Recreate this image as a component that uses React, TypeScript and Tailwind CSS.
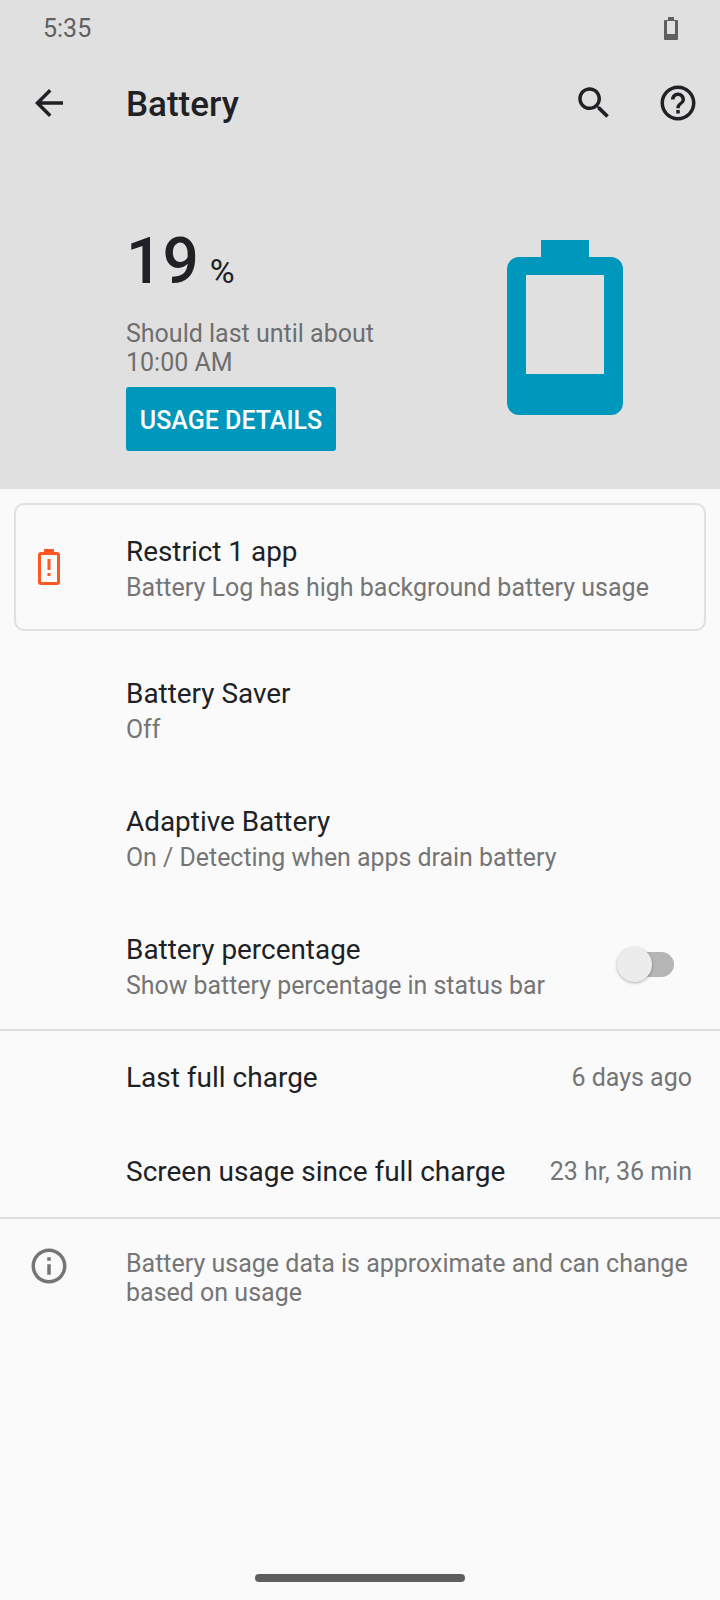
import React from 'react';

const font = { fontFamily: 'Roboto, sans-serif' };

const SettingRow: React.FC<{ title: string; summary: string; children?: React.ReactNode }> = ({ title, summary, children }) => (
    <div className="h-[128px] flex items-center pl-[126px] pr-[46px]">
        <div className="flex-1 min-w-0">
            <div className="text-[27.9px] leading-[37px] text-[#202124]">{title}</div>
            <div className="text-[24.9px] leading-[36px] text-[#757575]">{summary}</div>
        </div>
        {children}
    </div>
);

const ValueRow: React.FC<{ title: string; value: string; className: string }> = ({ title, value, className }) => (
    <div className={`flex items-center justify-between pl-[126px] pr-[28px] ${className}`}>
        <div className="text-[28px] text-[#202124]">{title}</div>
        <div className="text-[25px] text-[#757575]">{value}</div>
    </div>
);

const App: React.FC = () => {
    return (
        <div className="w-[720px] h-[1600px] bg-[#fafafa] flex flex-col relative overflow-hidden" style={font}>
            <div className="bg-[#e0e0e0] h-[489px] shrink-0">
                {/* status bar */}
                <div className="h-[56px] flex items-center justify-between pl-[43px] pr-[42px]">
                    <span className="pt-[2px] text-[25px] text-[#5f5f5f]">5:35</span>
                    <svg width="14" height="23" viewBox="0 0 14 23">
                        <path d="M4 0h6v3h3a1 1 0 0 1 1 1v18a1 1 0 0 1-1 1H1a1 1 0 0 1-1-1V4a1 1 0 0 1 1-1h3z" fill="#5f5f5f" />
                        <rect x="3" y="4" width="8" height="13" fill="#e0e0e0" />
                    </svg>
                </div>
                {/* toolbar */}
                <div className="h-[94px] flex items-center">
                    <div className="w-[98px] flex justify-center">
                        <svg width="42" height="42" viewBox="0 0 24 24" fill="#202124">
                            <path d="M20 11H7.830l5.590-5.590L12 4l-8 8 8 8 1.410-1.410L7.830 13H20v-2z" />
                        </svg>
                    </div>
                    <div className="ml-[28px] flex-1 pt-[4px] text-[35px] font-medium text-[#202124]">Battery</div>
                    <svg className="mr-[42px]" width="42" height="42" viewBox="0 0 24 24" fill="#202124">
                        <path d="M15.500 14h-.790l-.280-.270C15.410 12.590 16 11.110 16 9.500 16 5.910 13.090 3 9.500 3S3 5.910 3 9.500 5.910 16 9.500 16c1.610 0 3.090-.590 4.230-1.570l.270.280v.790l5 4.990L20.490 19l-4.990-5zm-6 0C7.010 14 5 11.990 5 9.500S7.010 5 9.500 5 14 7.010 14 9.500 11.990 14 9.500 14z" />
                    </svg>
                    <svg className="mr-[21px]" width="42" height="42" viewBox="0 0 24 24" fill="#202124">
                        <path d="M11 18h2v-2h-2v2zm1-16C6.480 2 2 6.480 2 12s4.480 10 10 10 10-4.480 10-10S17.520 2 12 2zm0 18c-4.410 0-8-3.590-8-8s3.590-8 8-8 8 3.590 8 8-3.590 8-8 8zm0-14c-2.210 0-4 1.790-4 4h2c0-1.100.9-2 2-2s2 .9 2 2c0 2-3 1.750-3 5h2c0-2.250 3-2.500 3-5 0-2.210-1.790-4-4-4z" />
                    </svg>
                </div>
                {/* battery summary */}
                <div className="flex justify-between pl-[126px] pr-[97px] pt-[76px]">
                    <div className="-mt-[2px]">
                        <div className="flex items-baseline h-[75px] text-[#202124]">
                            <span className="text-[64px] leading-[75px] font-medium">19</span>
                            <span className="text-[34px] ml-[11px]">%</span>
                        </div>
                        <div className="text-[25px] leading-[29px] text-[#6e6e6e] mt-[20px]">
                            Should last until about
                            <br />
                            10:00 AM
                        </div>
                        <div className="mt-[10px] w-[210px] h-[64px] pt-[4px] bg-[#0097bd] rounded-[3px] flex items-center justify-center text-[25px] font-medium text-white">
                            USAGE DETAILS
                        </div>
                    </div>
                    <svg className="mt-[14px]" width="116" height="175" viewBox="0 0 116 175">
                        <path
                            fillRule="evenodd"
                            fill="#0097bd"
                            d="M34 0h48v17h22a12 12 0 0 1 12 12v134a12 12 0 0 1-12 12H12a12 12 0 0 1-12-12V29a12 12 0 0 1 12-12h22zM19 35v99h78V35z"
                        />
                    </svg>
                </div>
            </div>

            {/* restrict card */}
            <div className="mt-[14px] mx-[14px] h-[128px] border-2 border-[#dfe0e2] rounded-[10px] flex items-center">
                <div className="w-[110px] pl-[22px] shrink-0">
                    <svg width="22" height="36" viewBox="0 0 22 36">
                        <path
                            fillRule="evenodd"
                            fill="#ff5722"
                            d="M6 0h10v3h3a3 3 0 0 1 3 3v27a3 3 0 0 1-3 3H3a3 3 0 0 1-3-3V6a3 3 0 0 1 3-3h3zM3 6v27h16V6zM9.500 10h3v11h-3zM9.500 24h3v3h-3z"
                        />
                    </svg>
                </div>
                <div className="mt-[5px]">
                    <div className="text-[27.9px] leading-[37px] text-[#202124]">Restrict 1 app</div>
                    <div className="text-[25px] leading-[36px] text-[#757575]">Battery Log has high background battery usage</div>
                </div>
            </div>

            <div className="mt-[16px] -mb-[2px] flex flex-col">
                <SettingRow title="Battery Saver" summary="Off" />
                <SettingRow title="Adaptive Battery" summary="On / Detecting when apps drain battery" />
                <SettingRow title="Battery percentage" summary="Show battery percentage in status bar">
                    <div className="relative w-[50px] h-[25px] -mt-[6px] rounded-full bg-[#b5b5b5]">
                        <div className="absolute -left-[7px] -top-[5px] w-[35px] h-[35px] rounded-full bg-[#ececec] shadow-[0_1px_3px_rgba(0,0,0,0.3)]" />
                    </div>
                </SettingRow>
            </div>

            <div className="h-[2px] bg-[#dcdde1]" />
            <ValueRow title="Last full charge" value="6 days ago" className="h-[93px]" />
            <ValueRow title="Screen usage since full charge" value="23 hr, 36 min" className="h-[93px] pt-[2px]" />
            <div className="h-[2px] bg-[#dcdde1]" />

            <div className="flex pt-[26px]">
                <div className="w-[98px] flex justify-center shrink-0">
                    <svg width="42" height="42" viewBox="0 0 24 24" fill="#757575">
                        <path d="M11 7h2v2h-2zm0 4h2v6h-2zm1-9C6.480 2 2 6.480 2 12s4.480 10 10 10 10-4.480 10-10S17.520 2 12 2zm0 18c-4.410 0-8-3.590-8-8s3.590-8 8-8 8 3.590 8 8-3.590 8-8 8z" />
                    </svg>
                </div>
                <div className="ml-[28px] mr-[28px] mt-[4px] text-[25px] leading-[29px] text-[#757575]">
                    Battery usage data is approximate and can change based on usage
                </div>
            </div>

            <div className="absolute bottom-[18px] left-[255px] w-[210px] h-[8px] rounded-full bg-[#5f5f5f]" />
        </div>
    );
};

export default App;
